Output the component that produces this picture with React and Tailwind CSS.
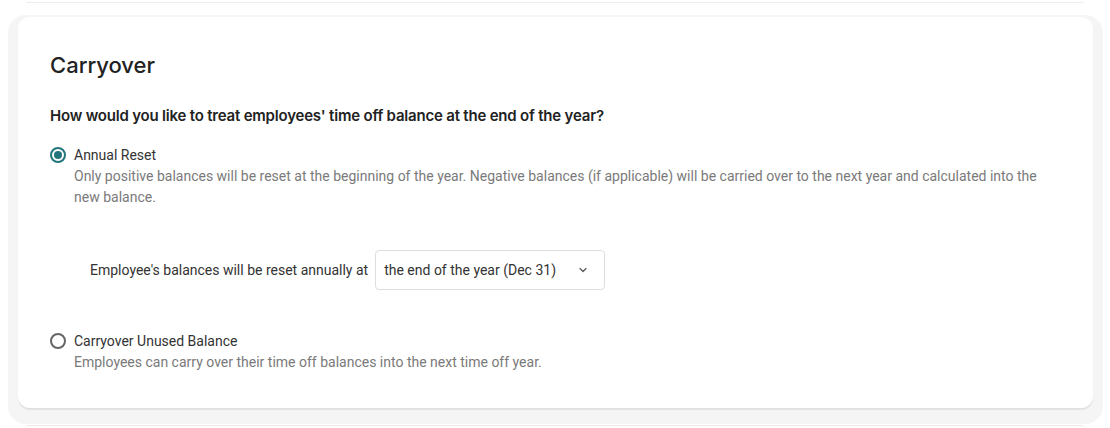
export default function App() {
  const font = { fontFamily: 'Inter, "Noto Sans", sans-serif' };
  const body = { fontFamily: 'Roboto, "Noto Sans", sans-serif' };
  return (
    <div className="w-[1110px] h-[428px] bg-white overflow-hidden relative" style={font}>
      <div className="mx-[25px] h-[3px] border-b border-[#ececec] rounded-b-lg"></div>
      <div className="ml-[8px] mr-[7px] mt-[12px] bg-[#f5f5f5] rounded-[18px] pt-[2px] px-[10px] pb-[16px]">
        <div className="bg-white rounded-[12px] shadow-[0_2px_1px_rgba(0,0,0,0.08)] pt-8 pb-[35px] px-8">
          <h2 className="text-[22px] leading-[32px] font-medium text-[#222]">Carryover</h2>
          <p className="mt-[24px] text-[15px] leading-[22px] font-semibold text-[#222] tracking-[-0.2px]">
            How would you like to treat employees' time off balance at the end of the year?
          </p>

          <div className="mt-[18px] flex gap-[8px]" style={body}>
            <div className="w-[16px] h-[20px] flex items-center">
              <div className="w-[16px] h-[16px] rounded-full border-2 border-[#23757c] flex items-center justify-center">
                <div className="w-[8px] h-[8px] rounded-full bg-[#23757c]"></div>
              </div>
            </div>
            <div className="flex-1">
              <div className="text-[14px] leading-[20px] text-[#333]">Annual Reset</div>
              <div className="mt-[1px] text-[14px] leading-[21px] text-[#7a7a7a] pr-[20px]">
                Only positive balances will be reset at the beginning of the year. Negative balances (if applicable) will be carried over to the next year and calculated into the new balance.
              </div>
            </div>
          </div>

          <div className="mt-[42px] ml-[40px] flex items-center gap-[7px]" style={body}>
            <span className="text-[14px] leading-[20px] text-[#333]">Employee's balances will be reset annually at</span>
            <div className="w-[230px] h-[40px] border border-[#dedede] rounded-[4px] flex items-center justify-between pl-[8px] pr-[17px]">
              <span className="text-[14px] text-[#333]">the end of the year (Dec 31)</span>
              <svg width="8" height="6" viewBox="0 0 8 6" fill="none">
                <path d="M1 1.5L4 4.5L7 1.5" stroke="#555" strokeWidth="1.2" strokeLinecap="round" strokeLinejoin="round" />
              </svg>
            </div>
          </div>

          <div className="mt-[41px] flex gap-[8px]" style={body}>
            <div className="w-[16px] h-[20px] flex items-center">
              <div className="w-[16px] h-[16px] rounded-full border-2 border-[#666]"></div>
            </div>
            <div className="flex-1">
              <div className="text-[14px] leading-[20px] text-[#333]">Carryover Unused Balance</div>
              <div className="mt-[1px] text-[14px] leading-[21px] text-[#7a7a7a]">
                Employees can carry over their time off balances into the next time off year.
              </div>
            </div>
          </div>
        </div>
      </div>
      <div className="mx-[25px] mt-[1px] h-[4px] border-t border-[#ececec] rounded-t-lg"></div>
    </div>
  );
}
